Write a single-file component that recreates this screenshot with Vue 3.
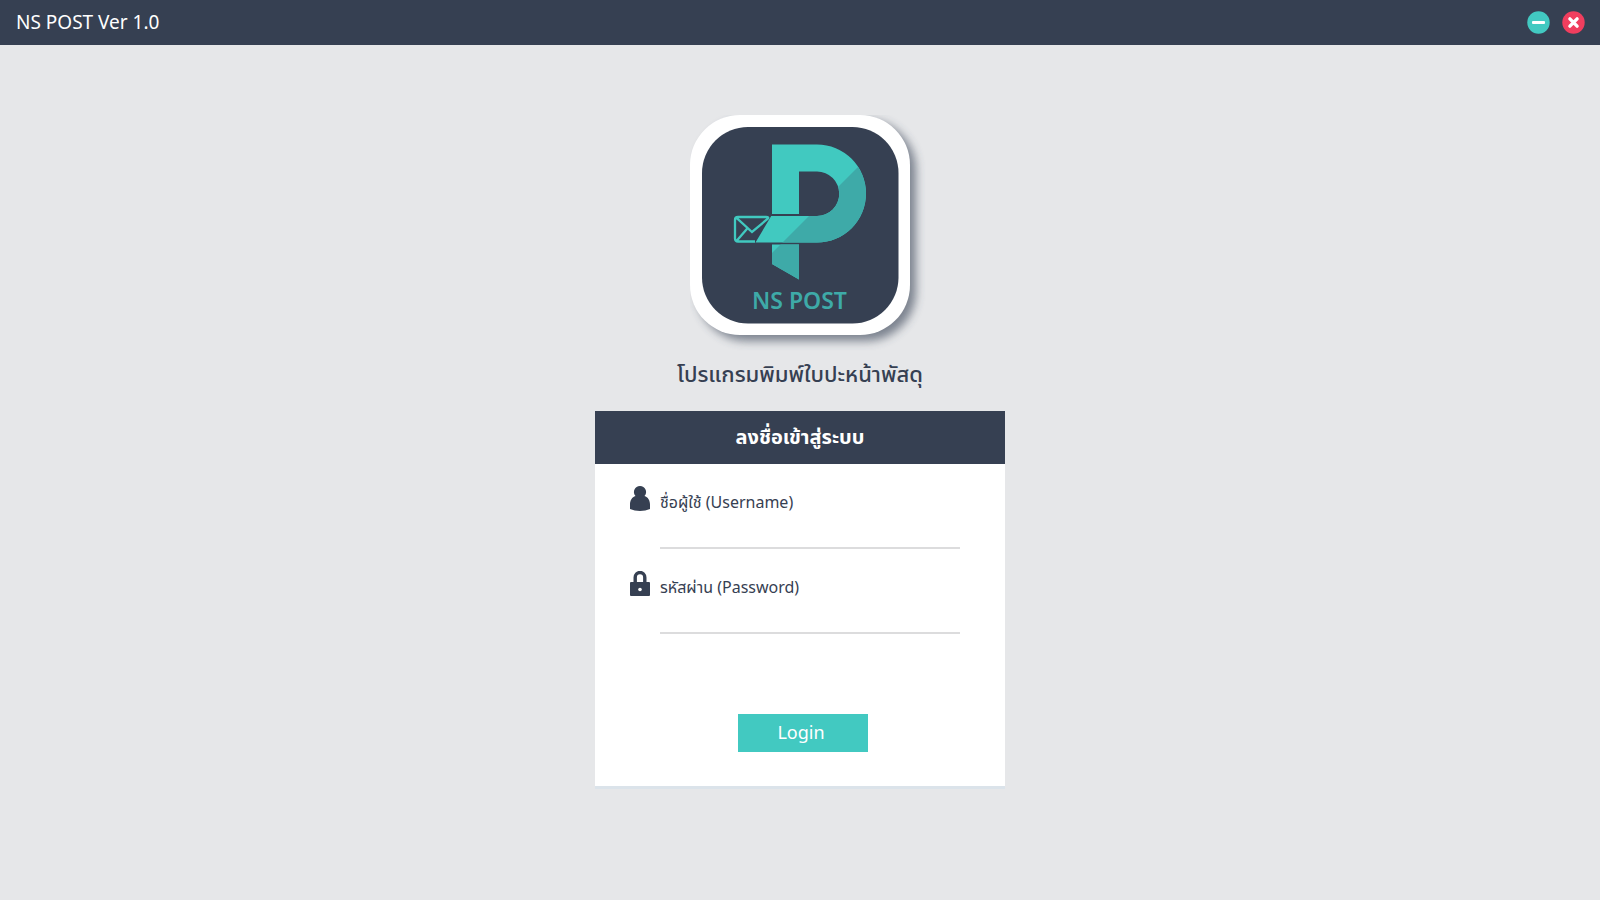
<script setup>
import { ref } from 'vue'

const username = ref('')
const password = ref('')
</script>

<template>
  <div class="app">
    <header class="titlebar">
      <h1 class="title">NS POST Ver 1.0</h1>
      <div class="window-actions">
        <button type="button" class="round" aria-label="Minimize">
          <svg viewBox="0 0 23 23" width="23" height="23">
            <circle cx="11.5" cy="11.5" r="11.2" fill="#42c9c1" />
            <rect x="5" y="9.9" width="13" height="3.2" rx="1" fill="#fff" />
          </svg>
        </button>
        <button type="button" class="round" aria-label="Close">
          <svg viewBox="0 0 23 23" width="23" height="23">
            <circle cx="11.5" cy="11.5" r="11.2" fill="#f03e5e" />
            <path d="M7.9 7.9L15.1 15.1M15.1 7.9L7.9 15.1" stroke="#fff" stroke-width="3.4" stroke-linecap="round" />
          </svg>
        </button>
      </div>
    </header>

    <main class="content">
      <svg class="logo" viewBox="10 10 240 240" width="240" height="240" role="img" aria-label="NS POST">
        <defs>
          <filter id="soft" x="-20%" y="-20%" width="140%" height="140%">
            <feGaussianBlur stdDeviation="5" />
          </filter>
          <clipPath id="shade"><path d="M0 240L240 0H250V250H0Z" /></clipPath>
          <g id="mark">
            <path d="M92 39.500H137A49 49 0 0 1 137 137.500H75.500L91.200 111H137A22.200 22.200 0 0 0 137 66.500H119V109H92Z" />
            <path d="M92 139.500H119V174.500L92 159Z" />
          </g>
        </defs>
        <rect x="17" y="15" width="219" height="221" rx="50" fill="#354052" opacity=".6" filter="url(#soft)" />
        <rect x="10" y="10" width="220" height="220" rx="50" fill="#fff" />
        <rect x="22" y="22" width="196.500" height="196.500" rx="46" fill="#364052" />
        <use href="#mark" fill="#41c9c0" />
        <use href="#mark" fill="#3eaaa8" clip-path="url(#shade)" />
        <path d="M75 136.500H58Q55 136.500 55 133.500V115Q55 112 58 112H86Q89.500 112 87.500 114L72 127L56.500 112.800M67.500 123.200L56.500 136" fill="none" stroke="#41c9c0" stroke-width="2.300" />
        <text x="119.500" y="204" text-anchor="middle" class="logo-text">NS POST</text>
      </svg>

      <p class="subtitle">โปรแกรมพิมพ์ใบปะหน้าพัสดุ</p>

      <form class="card" @submit.prevent>
        <h2 class="card-title">ลงชื่อเข้าสู่ระบบ</h2>
        <div class="fields">
          <div class="field">
            <svg class="icon" viewBox="0 0 20 25" width="20" height="25" fill="#364052">
              <path d="M10 0a6 6 0 0 1 4.500 10C18 11 20 14.500 20 18.500V23Q15.500 25 10 25T0 23V18.500C0 14.500 2 11 5.500 10A6 6 0 0 1 10 0Z" />
            </svg>
            <div class="control">
              <label for="username">ชื่อผู้ใช้ (Username)</label>
              <input id="username" v-model="username" type="text" autocomplete="username" />
            </div>
          </div>
          <div class="field">
            <svg class="icon" viewBox="0 0 20 25" width="20" height="25">
              <path d="M5.200 12V6.500a4.800 5 0 0 1 9.600 0V12" fill="none" stroke="#364052" stroke-width="3.400" />
              <rect y="11" width="20" height="14" rx="1" fill="#364052" />
              <circle cx="10" cy="18.500" r="1.800" fill="#fff" />
            </svg>
            <div class="control">
              <label for="password">รหัสผ่าน (Password)</label>
              <input id="password" v-model="password" type="password" autocomplete="current-password" />
            </div>
          </div>
        </div>
        <button type="submit" class="login">Login</button>
      </form>
    </main>
  </div>
</template>

<style>
body {
  margin: 0;
  background: #e6e7e9;
}
</style>

<style scoped>
.app {
  min-height: 100vh;
  background: #e6e7e9;
  color: #364052;
  font-family: "Noto Sans", "Noto Sans Thai", Tahoma, sans-serif;
}
.titlebar {
  display: flex;
  align-items: center;
  justify-content: space-between;
  height: 45px;
  padding: 0 15px 0 16px;
  background: #364052;
}
.title {
  margin: 0;
  padding-bottom: 2px;
  color: #fff;
  font-size: 19px;
  line-height: 24px;
  font-weight: 400;
}
.window-actions {
  display: flex;
  gap: 12px;
}
.round {
  display: block;
  padding: 0;
  border: 0;
  border-radius: 50%;
  background: none;
  cursor: pointer;
}
.round svg {
  display: block;
}
.content {
  display: flex;
  flex-direction: column;
  align-items: center;
  padding: 70px 16px 32px;
}
.logo {
  display: block;
  margin-left: 20px;
}
.logo-text {
  fill: #3eaaa8;
  font-family: "Noto Sans", sans-serif;
  font-size: 23px;
  font-weight: 600;
}
.subtitle {
  margin: 2px 0 22px;
  font-size: 22px;
  line-height: 32px;
  font-weight: 500;
}
.card {
  display: flex;
  flex-direction: column;
  width: 100%;
  max-width: 410px;
  background: #fff;
  border-bottom: 3px solid #dbe3ea;
}
.card-title {
  margin: 0;
  padding: 14px 0 15px;
  background: #364052;
  color: #fff;
  font-size: 20px;
  line-height: 24px;
  font-weight: 700;
  text-align: center;
}
.fields {
  display: flex;
  flex-direction: column;
  gap: 22px;
  padding: 22px 45px 0 35px;
}
.field {
  display: flex;
  gap: 10px;
}
.icon {
  flex: none;
}
.control {
  flex: 1;
  min-width: 0;
  display: flex;
  flex-direction: column;
  padding-top: 4px;
}
label {
  font-size: 16px;
  line-height: 24px;
}
input {
  height: 35px;
  box-sizing: border-box;
  width: 100%;
  padding: 0;
  border: 0;
  border-bottom: 2px solid #dcdcdd;
  background: transparent;
  color: inherit;
  font: inherit;
  outline: none;
}
.login {
  align-self: center;
  width: 130px;
  height: 38px;
  margin: 80px 0 34px 6px;
  padding: 0 4px 2px 0;
  border: 0;
  background: #42c9c1;
  color: #fff;
  font: inherit;
  font-size: 18px;
  line-height: 24px;
  cursor: pointer;
}
</style>
